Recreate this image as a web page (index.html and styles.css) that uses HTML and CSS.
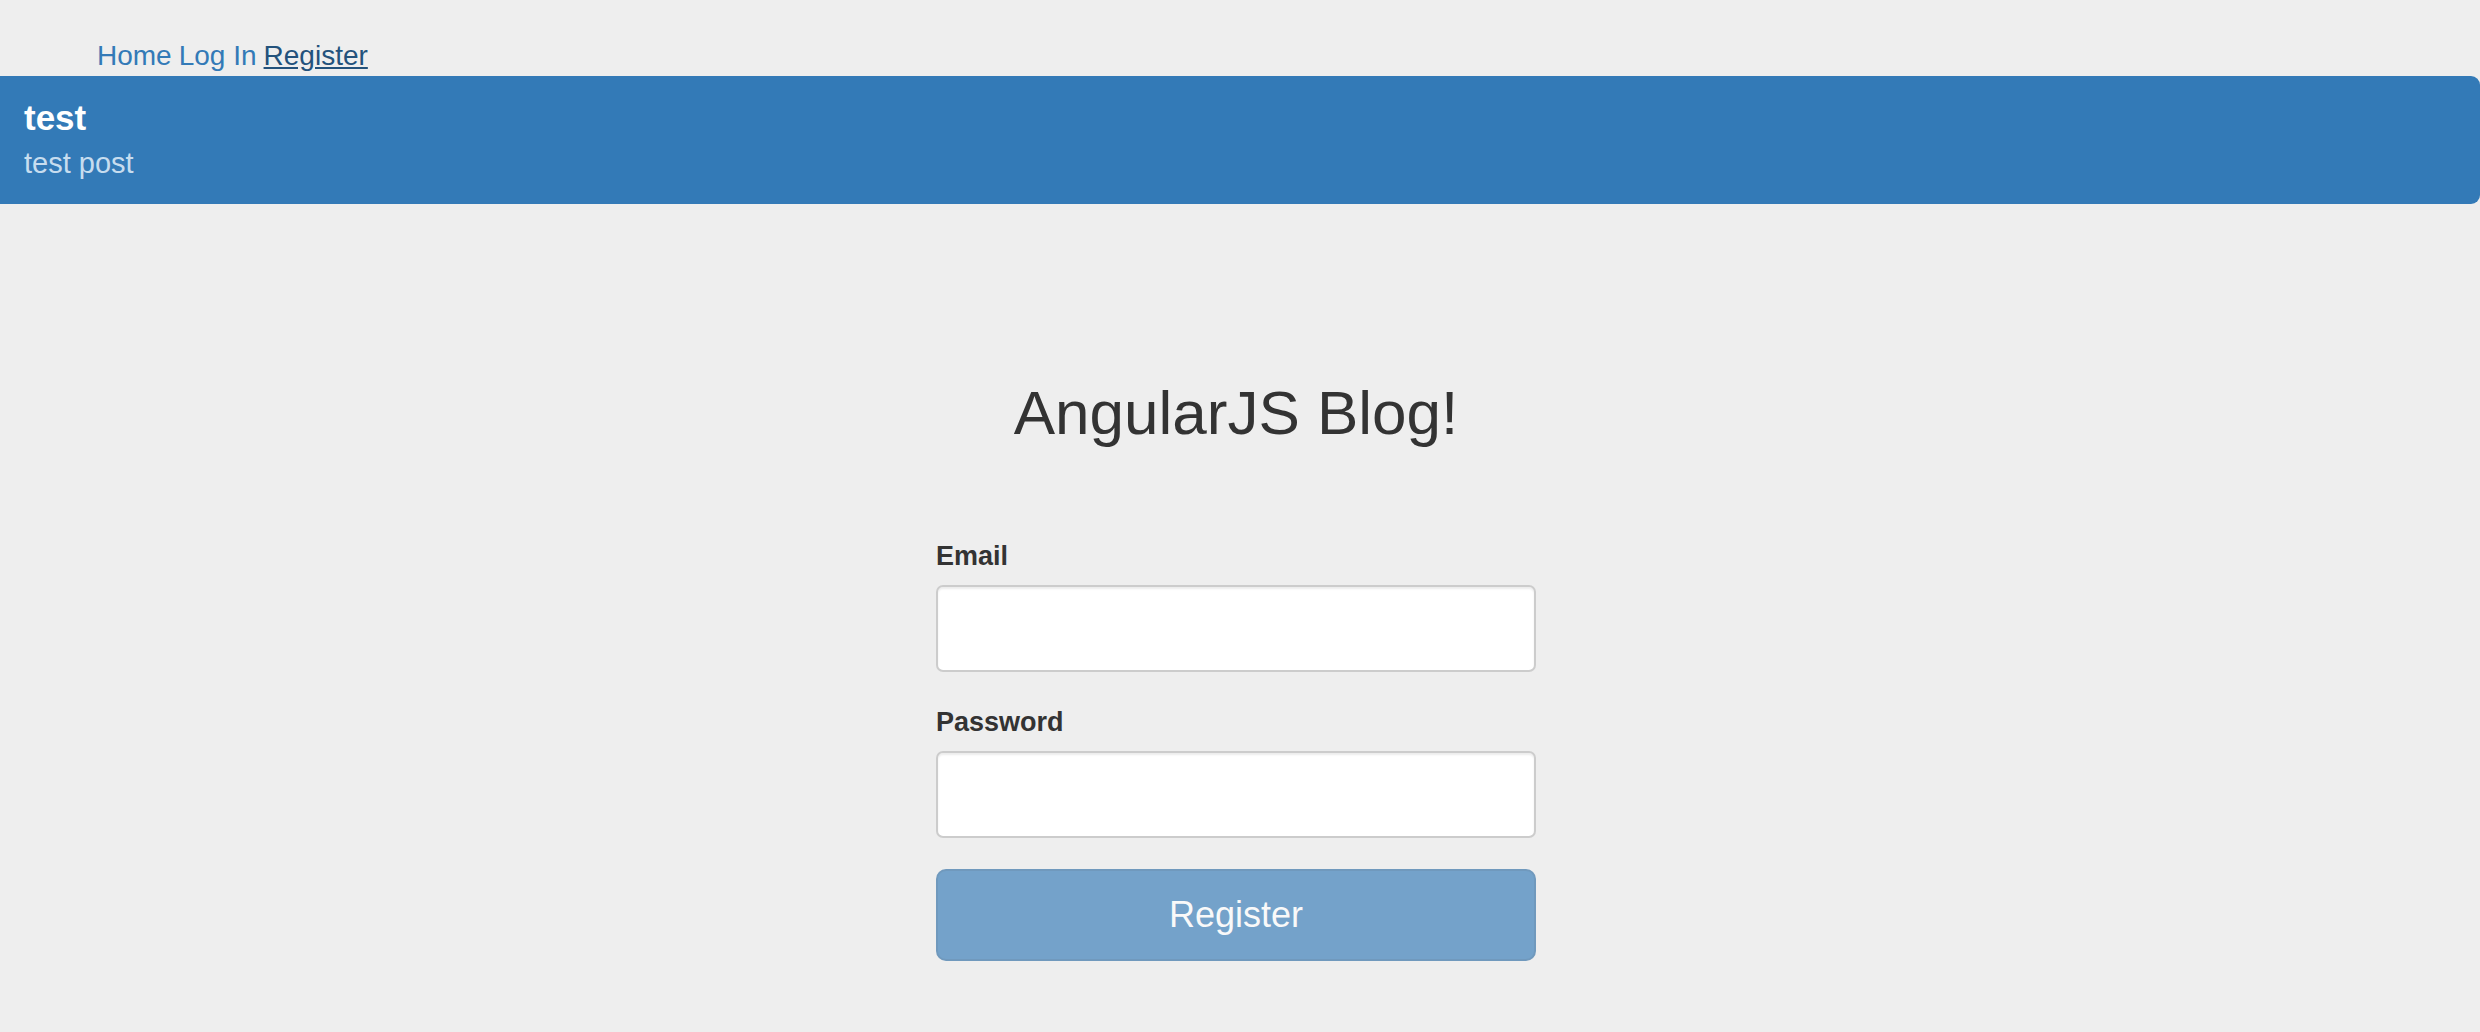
FILE: index.html
```html
<!DOCTYPE html>
<html lang="en">
<head>
    <meta charset="UTF-8">
    <title>AngularJS Blog - Register</title>
    <link rel="stylesheet" href="styles.css">
</head>
<body>
    <ul class="nav">
        <li><a href="#/">Home</a></li>
        <li><a href="#/login">Log In</a></li>
        <li><a href="#/register" class="current">Register</a></li>
    </ul>

    <div class="post-list">
        <a href="#/post/1" class="post-item active">
            <h4 class="post-title">test</h4>
            <p class="post-text">test post</p>
        </a>
    </div>

    <div class="main">
        <h1 class="page-title">AngularJS Blog!</h1>

        <form class="register-form" onsubmit="return false">
            <div class="form-group">
                <label for="email">Email</label>
                <input type="email" id="email" class="form-control">
            </div>
            <div class="form-group">
                <label for="password">Password</label>
                <input type="password" id="password" class="form-control">
            </div>
            <button type="submit" class="btn-primary" disabled>Register</button>
        </form>
    </div>
</body>
</html>
```

FILE: styles.css
```css
body {
    margin: 0;
    font-family: "Liberation Sans", Arial, Helvetica, sans-serif;
    background-color: #eeeeee;
    color: #333333;
}
a {
    color: #337ab7;
    text-decoration: none;
}
.nav {
    list-style: none;
    margin: 0;
    padding: 39px 0 3px 97px;
    display: flex;
    gap: 7px;
    font-size: 28px;
    line-height: 34px;
}
.nav a.current {
    color: #23527c;
    text-decoration: underline;
}
.post-item {
    display: block;
    padding: 22px 24px 24px;
    background-color: #337ab7;
    border-radius: 0 9px 9px 0;
    color: #ffffff;
}
.post-title {
    margin: 0 0 8px;
    font-size: 35px;
    line-height: 40px;
    font-weight: bold;
}
.post-text {
    margin: 0;
    font-size: 29px;
    line-height: 34px;
    color: #c7ddef;
}
.main {
    display: flex;
    flex-direction: column;
    align-items: center;
    padding-right: 8px;
}
.page-title {
    margin: 176px 0 94px;
    font-size: 62px;
    line-height: 66px;
    font-weight: normal;
}
.register-form {
    width: 600px;
}
.form-group {
    margin-bottom: 34px;
}
.form-group label {
    display: block;
    margin-bottom: 13px;
    font-size: 27px;
    line-height: 32px;
    font-weight: bold;
}
.form-control {
    display: block;
    box-sizing: border-box;
    width: 100%;
    height: 87px;
    margin: 0;
    border: 2px solid #cccccc;
    border-radius: 7px;
    background-color: #ffffff;
    box-shadow: inset 0 2px 2px rgba(0, 0, 0, 0.075);
    font-size: 28px;
}
.btn-primary {
    display: block;
    box-sizing: border-box;
    width: 100%;
    height: 92px;
    margin-top: -3px;
    border: 2px solid #2e6da4;
    border-radius: 10px;
    background-color: #337ab7;
    opacity: 0.65;
    color: #ffffff;
    font-family: inherit;
    font-size: 36px;
}
```
